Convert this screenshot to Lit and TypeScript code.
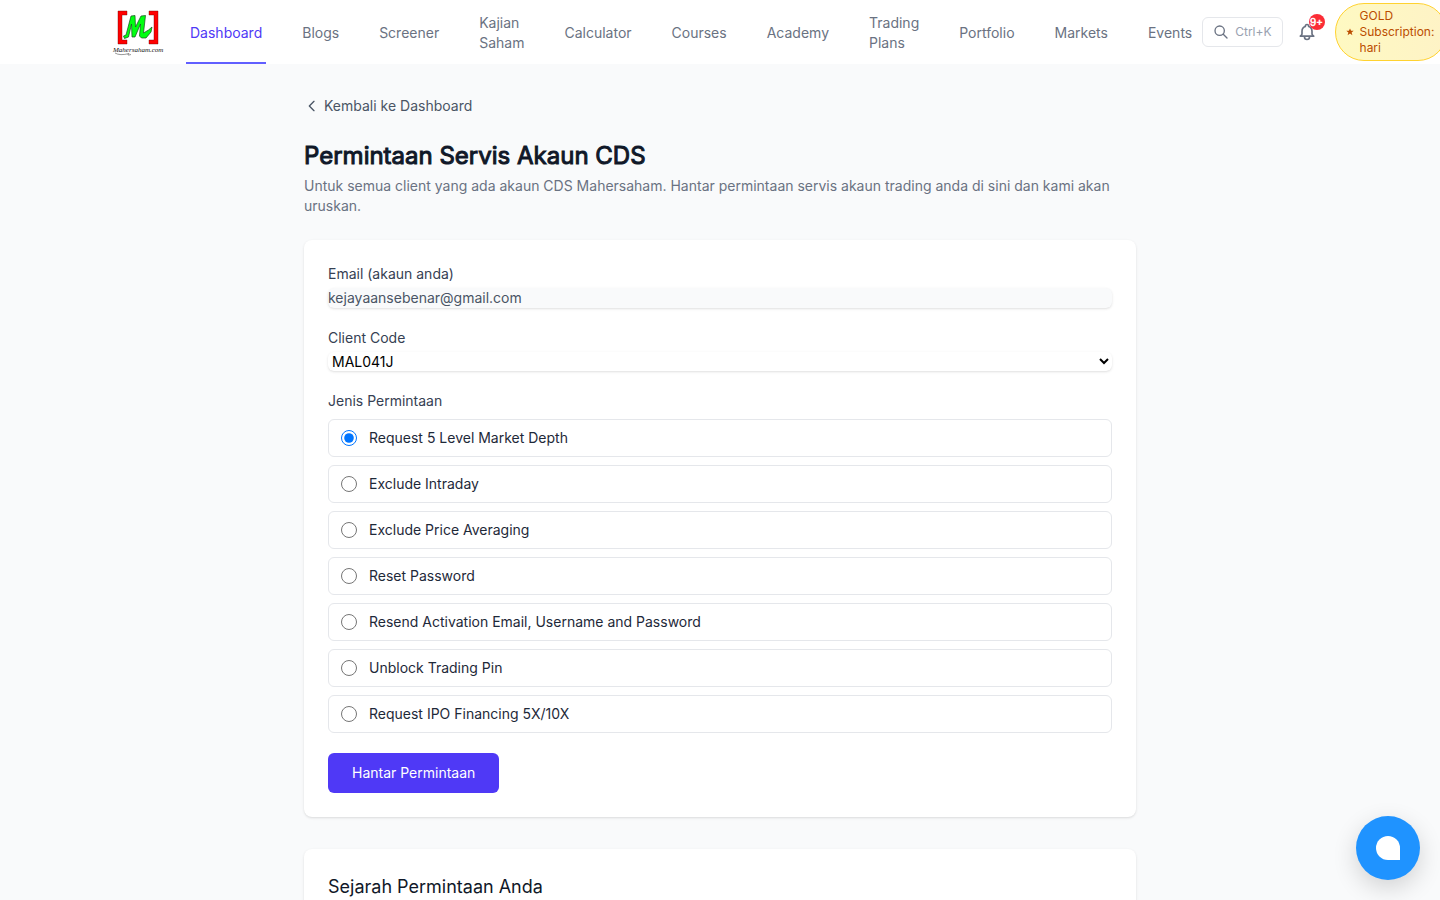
import { LitElement, html, css, svg } from "lit";
import { customElement, state } from "lit/decorators.js";

const NAV = [
  "Dashboard", "Blogs", "Screener", "Kajian Saham", "Calculator", "Courses",
  "Academy", "Trading Plans", "Portfolio", "Markets", "Events",
];

const REQUESTS = [
  "Request 5 Level Market Depth",
  "Exclude Intraday",
  "Exclude Price Averaging",
  "Reset Password",
  "Resend Activation Email, Username and Password",
  "Unblock Trading Pin",
  "Request IPO Financing 5X/10X",
];

const logo = svg`
  <path d="M6 3H15V7H10V32H15V36H6Z" fill="#f00" stroke="#600" stroke-width=".4"/>
  <path d="M46 3H37V7H42V32H37V36H46Z" fill="#f00" stroke="#600" stroke-width=".4"/>
  <path d="M11.500 28L14 27L19 8L23 7.500L23.500 19L29 8L33.500 7.500L31.500 25L36.500 22L40 19L39 24L34 30L29.500 30L27.500 28L28.500 16L23 29L20 29L19.500 16L16.500 29L12.500 30.500Z" fill="#0f1" stroke="#174a1c" stroke-width=".7" stroke-linejoin="round"/>
  <path d="M3 45Q8 48 17 45.500Q14 48 19 46.500" fill="none" stroke="#333" stroke-width=".5"/>
  <text x="1" y="44" class="wordmark">Mahersaham.com</text>`;

@customElement("app-root")
export class AppRoot extends LitElement {
  static styles = css`
    :host {
      display: block;
      min-height: 100vh;
      overflow-x: clip;
      background: #f9fafb;
      color: #101828;
      font-family: Inter, "Liberation Sans", sans-serif;
      font-size: 14px;
      line-height: 20px;
    }
    * { box-sizing: border-box; }
    a { color: inherit; text-decoration: none; }
    button, input, select { font: inherit; margin: 0; }
    svg { display: block; flex: none; }

    .header { background: #fff; }
    .bar {
      display: flex;
      max-width: 1280px;
      height: 64px;
      margin: 0 auto;
      padding: 0 32px;
    }
    .brand { display: flex; align-items: center; margin-right: 24px; }
    .wordmark {
      font: italic 400 7px "Liberation Serif", serif;
      fill: #111;
    }
    .nav { display: flex; gap: 32px; }
    .link {
      display: flex;
      align-items: center;
      padding: 4px 4px 0;
      border-bottom: 2px solid transparent;
      color: #6a7282;
    }
    .link.active { color: #4f39f6; border-color: #615fff; }
    .tools { display: flex; align-items: center; margin-left: 6px; }
    .search {
      display: flex;
      align-items: center;
      gap: 6px;
      height: 30px;
      padding: 0 10px;
      border: 1px solid #e5e7eb;
      border-radius: 6px;
      background: #fff;
      color: #99a1af;
      font-size: 12px;
      line-height: 16px;
    }
    .search svg { color: #6a7282; }
    .bell {
      position: relative;
      margin-left: 14px;
      padding: 0;
      border: 0;
      background: none;
      color: #6a7282;
    }
    .count {
      position: absolute;
      top: 0;
      right: 0;
      transform: translate(8px, -8px);
      width: 16px;
      height: 16px;
      border-radius: 50%;
      background: #fb2c36;
      color: #fff;
      font-size: 10px;
      font-weight: 400;
      -webkit-text-stroke: 0.5px currentColor;
      line-height: 16px;
      text-align: center;
    }
    .plan {
      display: flex;
      align-items: center;
      gap: 6px;
      margin-left: 18px;
      padding: 4px 12px 4px 10px;
      border: 1px solid #ffd230;
      border-radius: 999px;
      background: linear-gradient(90deg, #fef9c2, #fef3c6);
      color: #bb4d00;
      font-size: 12px;
      line-height: 16px;
    }

    .main { max-width: 896px; margin: 0 auto; padding: 32px; }
    .back {
      display: inline-flex;
      align-items: center;
      gap: 4px;
      color: #4a5565;
    }
    .back-row { display: flex; margin-bottom: 24px; }
    .title {
      margin: 0;
      font-size: 24px;
      font-weight: 400;
      line-height: 32px;
      -webkit-text-stroke: 1px currentColor;
    }
    .intro { margin: 4px 0 24px; color: #6a7282; }
    .card {
      padding: 24px;
      border-radius: 8px;
      background: #fff;
      box-shadow: 0 1px 3px rgb(0 0 0 / 0.1), 0 1px 2px -1px rgb(0 0 0 / 0.1);
    }
    .form + .card { margin-top: 32px; }
    .form { display: flex; flex-direction: column; gap: 20px; }
    .field { display: flex; flex-direction: column; gap: 4px; }
    .label { padding: 0; color: #364153; }
    .control {
      width: 100%;
      border: 0;
      border-radius: 6px;
      box-shadow: 0 1px 3px rgb(0 0 0 / 0.1), 0 1px 2px -1px rgb(0 0 0 / 0.1);
    }
    .email { height: 20px; padding: 0; background: #f9fafb; color: #4a5565; outline: 0; }
    .code { height: 19px; padding: 0; background: #fff; color: #000; }
    .choices { min-width: 0; margin: 0; padding: 0; border: 0; }
    .list { display: flex; flex-direction: column; gap: 8px; margin-top: 8px; }
    .choice {
      display: flex;
      align-items: center;
      gap: 12px;
      padding: 8px 12px;
      border: 1px solid #e5e7eb;
      border-radius: 6px;
      color: #1e2939;
    }
    .radio { width: 16px; height: 16px; margin: 0; }
    .submit {
      align-self: flex-start;
      padding: 10px 24px;
      border: 0;
      border-radius: 6px;
      background: #4f39f6;
      color: #fff;
    }
    .subtitle { margin: 0; font-size: 18px; font-weight: 400; line-height: 28px; }
    .chat {
      position: fixed;
      right: 20px;
      bottom: 20px;
      display: grid;
      place-items: center;
      width: 64px;
      height: 64px;
      padding: 0;
      border: 0;
      border-radius: 50%;
      background: #1f93ff;
      box-shadow: 0 8px 24px rgb(0 0 0 / 0.16);
    }
    .bubble {
      width: 24px;
      height: 24px;
      border-radius: 50% 50% 0 50%;
      background: #fff;
    }
  `;

  @state() private selected = 0;

  render() {
    return html`
      <header class="header">
        <div class="bar">
          <a class="brand" href="#" aria-label="Mahersaham">
            <svg width="50" height="48" viewBox="0 0 50 48" overflow="visible">${logo}</svg>
          </a>
          <nav class="nav">
            ${NAV.map((name, i) => html`<a class="link ${i === 0 ? "active" : ""}" href="#">${name}</a>`)}
          </nav>
          <div class="tools">
            <button class="search" type="button">
              <svg width="16" height="16" viewBox="0 0 24 24" fill="none" stroke="currentColor" stroke-width="2" stroke-linecap="round">
                <path d="m21 21-6-6m2-5a7 7 0 1 1-14 0 7 7 0 0 1 14 0Z" />
              </svg>
              <span>Ctrl+K</span>
            </button>
            <button class="bell" type="button" aria-label="Notifikasi">
              <svg width="20" height="20" viewBox="0 0 24 24" fill="none" stroke="currentColor" stroke-width="2" stroke-linecap="round" stroke-linejoin="round">
                <path d="M15 17h5l-1.4-1.4A2 2 0 0 1 18 14.200V11a6 6 0 0 0-4-5.660V5a2 2 0 1 0-4 0v.34A6 6 0 0 0 6 11v3.160c0 .54-.2 1.050-.6 1.440L4 17h5m6 0v1a3 3 0 1 1-6 0v-1m6 0H9" />
              </svg>
              <span class="count">9+</span>
            </button>
            <a class="plan" href="#">
              <svg width="8" height="8" viewBox="0 0 20 20" fill="currentColor">
                <path d="m10 1 2.700 6h6.500l-5.200 4.200 2 6.800-6-4-6 4 2-6.800L.8 7h6.500Z" />
              </svg>
              <span>GOLD Subscription: hari</span>
            </a>
          </div>
        </div>
      </header>

      <main class="main">
        <div class="back-row">
          <a class="back" href="#">
            <svg width="16" height="16" viewBox="0 0 24 24" fill="none" stroke="currentColor" stroke-width="2" stroke-linecap="round" stroke-linejoin="round">
              <path d="m15 19-7-7 7-7" />
            </svg>
            Kembali ke Dashboard
          </a>
        </div>
        <h1 class="title">Permintaan Servis Akaun CDS</h1>
        <p class="intro">
          Untuk semua client yang ada akaun CDS Mahersaham. Hantar permintaan servis akaun trading anda di sini dan kami akan uruskan.
        </p>

        <form class="card form">
          <div class="field">
            <label class="label" for="email">Email (akaun anda)</label>
            <input class="control email" id="email" type="email" readonly value="kejayaansebenar@gmail.com" />
          </div>
          <div class="field">
            <label class="label" for="code">Client Code</label>
            <select class="control code" id="code">
              <option>MAL041J</option>
            </select>
          </div>
          <fieldset class="choices">
            <legend class="label">Jenis Permintaan</legend>
            <div class="list">
              ${REQUESTS.map(
                (text, i) => html`
                  <label class="choice">
                    <input
                      class="radio"
                      type="radio"
                      name="request"
                      .checked=${this.selected === i}
                      @change=${() => (this.selected = i)}
                    />
                    <span>${text}</span>
                  </label>
                `,
              )}
            </div>
          </fieldset>
          <button class="submit" type="button">Hantar Permintaan</button>
        </form>

        <section class="card">
          <h2 class="subtitle">Sejarah Permintaan Anda</h2>
        </section>
      </main>

      <button class="chat" type="button" aria-label="Chat"><span class="bubble"></span></button>
    `;
  }
}
